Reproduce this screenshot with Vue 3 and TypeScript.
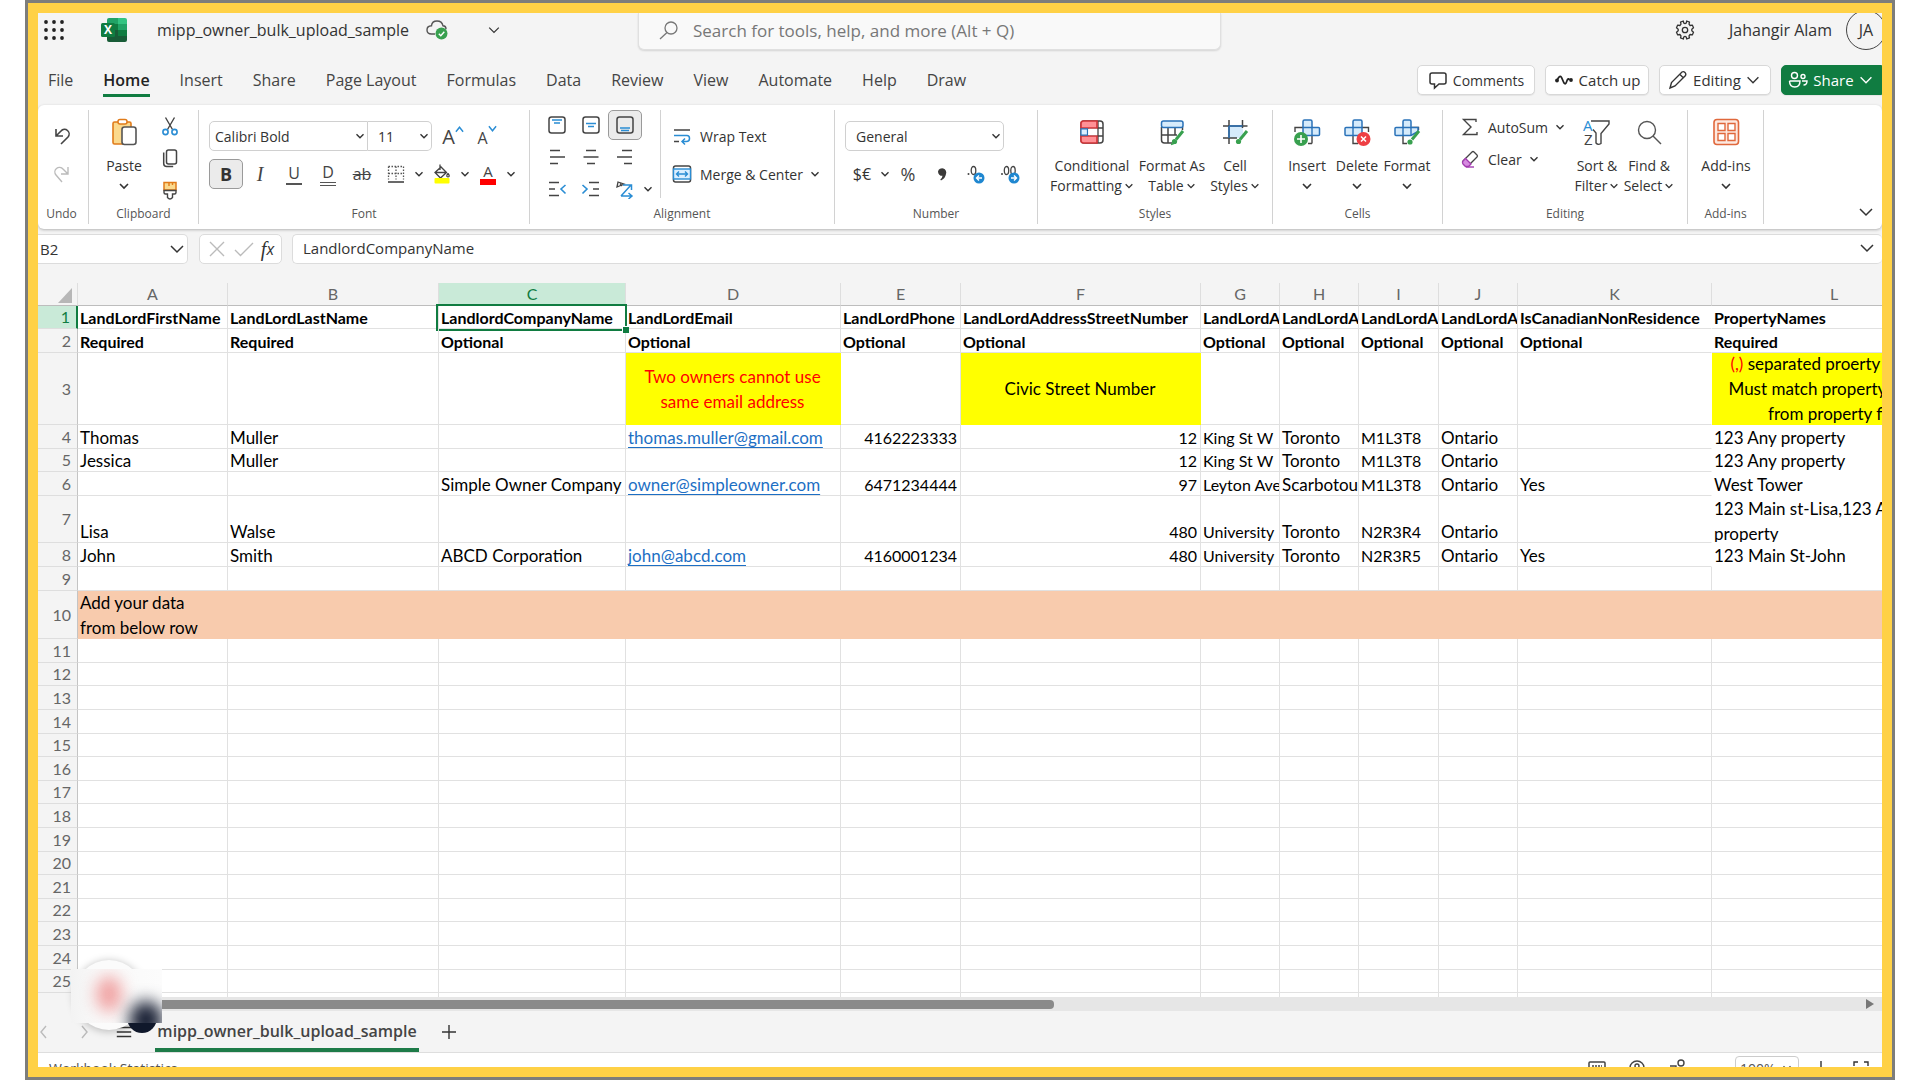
<script setup lang="ts">
import { computed, ref } from 'vue'

interface Column { key: string; cls: string }
interface Row { n: number; size: string; cells: Record<string, string> }

const icons: Record<string, string> = {
  chevron: '<path d="M4 6l4 4 4-4" fill="none" stroke="currentColor" stroke-width="1.6"/>',
  wide: '<path d="M4 7l6 6 6-6" fill="none" stroke="currentColor" stroke-width="1.5"/>',
  undo: '<path d="M4 3v7h7M4 10l5-5a4.600 4.600 0 0 1 7 6l-7 7" fill="none" stroke="#444" stroke-width="1.6"/>',
  redo: '<path d="M16 3v7H9M16 10l-5-5a4.600 4.600 0 0 0-7 6l6 7" fill="none" stroke="#bbb" stroke-width="1.4"/>',
  paste: '<rect x="3" y="4" width="18" height="22" rx="1.500" fill="#fbd98d" stroke="#e07b1a" stroke-width="1.6"/><rect x="8" y="1.500" width="9" height="4.500" rx="2" fill="#fff" stroke="#e07b1a" stroke-width="1.500"/><rect x="12" y="9" width="14" height="17.500" rx="2.500" fill="#fff" stroke="#555" stroke-width="1.6"/>',
  cut: '<path d="M5.500 1.500l7 12M14.500 1.500l-7 12" stroke="#444" stroke-width="1.400" fill="none"/><circle cx="5.500" cy="16" r="2.600" fill="none" stroke="#2a8dd4" stroke-width="1.600"/><circle cx="14.500" cy="16" r="2.600" fill="none" stroke="#2a8dd4" stroke-width="1.600"/>',
  copy: '<rect x="6.500" y="2" width="10" height="14" rx="2" fill="#fff" stroke="#444" stroke-width="1.500"/><path d="M3.700 4.500v11q0 3 3 3h6.500" fill="none" stroke="#444" stroke-width="1.500"/>',
  painter: '<path d="M4 10V2.500h12V10z" fill="#fbd98d" stroke="#e07b1a" stroke-width="1.500"/><path d="M9 2v4M12.500 2v3" stroke="#e07b1a" stroke-width="1.400"/><path d="M4 10.500h12v2q0 1.500-1.500 1.500h-2v3.500q-2.500 3-5 0V14h-2Q4 14 4 12.500z" fill="#fff" stroke="#444" stroke-width="1.400"/>',
  borders: '<path d="M2.500 2.500h15M2.500 9.500h15M2.500 2.500v13M10 2.500v13M17.500 2.500v13" stroke="#555" stroke-width="1.300" stroke-dasharray="1.500 1.500" fill="none"/><path d="M2 18h16" stroke="#444" stroke-width="1.600"/>',
  fill: '<path d="M3 8.500l6-5.500 5.500 5.500-6 5.500zM3.500 8.500h10.500M8 6V0.500" fill="none" stroke="#444" stroke-width="1.300"/><path d="M16 9.500q2.500 3 0 3.500-2.500-.5 0-3.500" fill="none" stroke="#444" stroke-width="1.200"/><rect x="2.500" y="14" width="15" height="5.500" rx="1" fill="#ff0"/>',
  top: '<rect x="2" y="2" width="16" height="16" rx="2.500" fill="#fff" stroke="#444" stroke-width="1.500"/><path d="M5 5h10M7 8h6" stroke="#2a8dd4" stroke-width="1.500"/>',
  middle: '<rect x="2" y="2" width="16" height="16" rx="2.500" fill="#fff" stroke="#444" stroke-width="1.500"/><path d="M5 8.500h10M7 11.500h6" stroke="#2a8dd4" stroke-width="1.500"/>',
  bottom: '<rect x="2" y="2" width="16" height="16" rx="2.500" fill="none" stroke="#444" stroke-width="1.500"/><path d="M5 13h10M6 15.500h8" stroke="#2a8dd4" stroke-width="1.500"/>',
  left: '<path d="M3 3.500h10M3 10h15M3 16.500h8" stroke="#444" stroke-width="1.400"/>',
  center: '<path d="M5 3.500h10M2.500 10h15M6 16.500h8" stroke="#444" stroke-width="1.400"/>',
  right: '<path d="M7 3.500h10M2 10h15M9 16.500h8" stroke="#444" stroke-width="1.400"/>',
  outdent: '<path d="M2 3.500h10M2 10h6M2 16.500h10" stroke="#444" stroke-width="1.400"/><path d="M18.500 6L14 10l4.500 4.500" fill="none" stroke="#2a8dd4" stroke-width="1.600"/>',
  indent: '<path d="M8 3.500h10M12 10h6M8 16.500h10" stroke="#444" stroke-width="1.400"/><path d="M1.500 6L6 10l-4.500 4.500" fill="none" stroke="#2a8dd4" stroke-width="1.600"/>',
  orient: '<path d="M2 8L3 3l6 2zM5 4.500l2 2.500" fill="none" stroke="#444" stroke-width="1.300"/><path d="M6 17L16 6M8 6h8.500v5M6 17h10.500M13.500 14l3.500 3-3.500 3" fill="none" stroke="#2a8dd4" stroke-width="1.500"/>',
  wrap: '<path d="M2 4h16M2 15.500h5" stroke="#444" stroke-width="1.500"/><path d="M2 9.500h13q2.500 0 2.500 3t-3 3H10M13 12.500l-3 3 3 3" fill="none" stroke="#2a8dd4" stroke-width="1.500"/>',
  merge: '<rect x="1.500" y="2" width="17" height="16" rx="2" fill="#fff" stroke="#444" stroke-width="1.500"/><rect x="1.500" y="5" width="17" height="10" fill="#dcefff" stroke="#2a8dd4" stroke-width="1.400"/><path d="M4.500 10h11M7 7.500L4.500 10 7 12.500M13 7.500l2.500 2.500-2.500 2.500" fill="none" stroke="#2a8dd4" stroke-width="1.400"/>',
  comma: '<path d="M6 7.500a4.200 4.200 0 1 1 8 2.500q-.8 4.500-5 6.500l-.7-1q2-1.500 2.200-3.700A4.200 4.200 0 0 1 6 7.500" fill="#3b3a39"/>',
  decLeft: '<circle cx="2.500" cy="10" r="1" fill="#444"/><ellipse cx="7.500" cy="6.500" rx="2.300" ry="4" fill="none" stroke="#444" stroke-width="1.300"/><circle cx="13" cy="14" r="5.500" fill="#1f87d0"/><path d="M16 14h-5.500M13 11.500L10.500 14l2.500 2.500" fill="none" stroke="#fff" stroke-width="1.400"/>',
  decRight: '<circle cx="2" cy="10" r="1" fill="#444"/><ellipse cx="6.500" cy="6.500" rx="2.200" ry="4" fill="none" stroke="#444" stroke-width="1.300"/><ellipse cx="13" cy="6.500" rx="2.200" ry="4" fill="none" stroke="#444" stroke-width="1.300"/><circle cx="14" cy="14" r="5.500" fill="#1f87d0"/><path d="M11 14h5.500M14 11.500l2.500 2.500-2.500 2.500" fill="none" stroke="#fff" stroke-width="1.400"/>',
  conditional: '<rect x="3" y="3" width="22" height="22" rx="3" fill="#fff" stroke="#444" stroke-width="1.500"/><path d="M20 3v22M3 10h22M3 18h22" stroke="#444" stroke-width="1.300"/><path d="M5.500 3H19v7H3V5.500Q3 3 5.500 3M3 18h16v7H5.500Q3 25 3 22.500z" fill="#ff9196" stroke="#d13438" stroke-width="1.600"/><path d="M3 10.800h6.500v6.400H3z" fill="#dcefff" stroke="#2a72b8" stroke-width="1.200"/><path d="M10.500 10.800H19v6.400h-8.500z" fill="#fff"/>',
  table: '<path d="M3.500 9v13q0 3 3 3H14M3.500 17H19M10 9v16M17 9v8M24.500 9v3" fill="none" stroke="#444" stroke-width="1.500"/><rect x="3.500" y="3" width="21.500" height="6.500" rx="2" fill="#d6ebfb" stroke="#2a72b8" stroke-width="1.500"/><path d="M25 13l-7 8.500" stroke="#38a04f" stroke-width="3"/><circle cx="16.500" cy="23.500" r="2.600" fill="#38a04f"/><path d="M13 26.500l4-1.500" stroke="#38a04f" stroke-width="1.500"/>',
  cellstyle: '<rect x="8" y="8" width="14" height="12" fill="#d6ebfb"/><path d="M2 8h24.500M2 20h14M8 2v24M21.500 2v8" stroke="#444" stroke-width="1.500"/><path d="M8 8h13.500M8 8v12" stroke="#2a72b8" stroke-width="1.500"/><path d="M26 13l-7 8.500" stroke="#38a04f" stroke-width="3"/><circle cx="17.500" cy="23.500" r="2.600" fill="#38a04f"/>',
  insert: '<path d="M2 14V9.500h8M19 25.500h-4M19 25.500V18" fill="none" stroke="#444" stroke-width="1.400"/><path d="M10 3.500q0-1.500 1.500-1.500h6q1.500 0 1.500 1.500V9.500h6.500q1 0 1 1v6q0 1-1 1H10z" fill="#d6ebfb" stroke="#2a72b8" stroke-width="1.500"/><path d="M10 9.500h9v8" fill="none" stroke="#2a72b8" stroke-width="1.400"/><circle cx="8" cy="21" r="7" fill="#38a04f"/><path d="M8 17v8M4 21h8" stroke="#fff" stroke-width="1.600"/>',
  remove: '<path d="M10 18v7.500h5M19 9.500h6.500V14" fill="none" stroke="#444" stroke-width="1.400"/><path d="M10 9.500V3.500Q10 2 11.500 2h6Q19 2 19 3.500v14H3q-1 0-1-1v-6q0-1 1-1z" fill="#d6ebfb" stroke="#2a72b8" stroke-width="1.500"/><path d="M10 9.500h9M10 9.500v8" stroke="#2a72b8" stroke-width="1.400"/><circle cx="20.500" cy="21" r="7" fill="#ee3f44"/><path d="M18 18.500l5 5M23 18.500l-5 5" stroke="#fff" stroke-width="1.500"/>',
  format: '<path d="M10 18v7.500h4M19 9.500h6.500V12" fill="none" stroke="#444" stroke-width="1.400"/><path d="M10 9.500V3.500Q10 2 11.500 2h5Q18 2 18 3.500v6h7v4L18 17.500H3q-1 0-1-1v-6q0-1 1-1z" fill="#d6ebfb" stroke="#2a72b8" stroke-width="1.500"/><path d="M10 9.500h8v8M10 9.500v8" fill="none" stroke="#2a72b8" stroke-width="1.400"/><path d="M26 13l-7 8.500" stroke="#38a04f" stroke-width="3"/><circle cx="17" cy="24" r="2.600" fill="#38a04f"/>',
  sum: '<path d="M16 5V2.500H3.500L11 10l-7.500 7.500H17V15" fill="none" stroke="#444" stroke-width="1.400"/>',
  eraser: '<path d="M3 12l9-9q1-1 2 0l3 3q1 1 0 2l-9 9H6l-3-3q-1-1 0-2" fill="#fff" stroke="#444" stroke-width="1.300"/><path d="M3 12l2.500-2.500L11 15l-2.500 2.500h-3L3 15q-1-1.500 0-3" fill="#d68be0" stroke="#a33bb0" stroke-width="1.300"/><path d="M6 18h8" stroke="#a33bb0" stroke-width="1.400"/>',
  sort: '<text x="0" y="13" font-size="15" font-family="Open Sans, sans-serif" fill="#2a8dd4">A</text><text x="1" y="27" font-size="15" font-family="Open Sans, sans-serif" fill="#444">Z</text><path d="M8 3h18v3l-8 9.500v10q-3 2-5-.500V15l-3-3.500" fill="none" stroke="#444" stroke-width="1.400"/>',
  find: '<circle cx="12" cy="12" r="8.500" fill="none" stroke="#555" stroke-width="1.400"/><path d="M18 18l8 8" stroke="#555" stroke-width="1.400"/>',
  addins: '<rect x="2" y="1.500" width="24.500" height="25" rx="3" fill="#fde9e0" stroke="#e0683c" stroke-width="1.600"/><path d="M6 5.500h7v7H6zM16 5.500h7v7h-7zM6 15.500h7v7H6zM16 15.500h7v7h-7z" fill="#fff" stroke="#e0683c" stroke-width="1.400"/>',
  comment: '<path d="M4 3h12q2 0 2 2v7q0 2-2 2h-5l-4.500 4v-4H4q-2 0-2-2V5q0-2 2-2z" fill="none" stroke="#333" stroke-width="1.500"/>',
  catchup: '<path d="M3 10.500q2.500-6 4.500-3l2.500 5.500q1.500 2 2.500-1l1-2.500q1-1.500 2 .5" fill="none" stroke="#222" stroke-width="1.700"/><circle cx="3" cy="10.500" r="1.900" fill="#222"/><circle cx="17" cy="10" r="1.900" fill="#222"/>',
  pencil: '<path d="M2 18l1.500-5.500L14 2q1.500-1 3 .5t.5 3L7 16zM12 4.500L15.500 8" fill="none" stroke="#333" stroke-width="1.400"/>',
  people: '<circle cx="6.500" cy="5.500" r="3" fill="none" stroke="#fff" stroke-width="1.400"/><circle cx="15" cy="6.500" r="2" fill="none" stroke="#fff" stroke-width="1.400"/><path d="M1.500 11h10.500q0 6-5.200 6T1.500 11M14 11h5q0 4-3.500 4" fill="none" stroke="#fff" stroke-width="1.400"/>',
  search: '<circle cx="12" cy="8" r="6" fill="none" stroke="#777" stroke-width="1.300"/><path d="M8 12.500L1 19" stroke="#777" stroke-width="1.300"/>',
  gear: '<path d="M8.300 1l.4 2L10 3.600 11.300 3l.4-2 2.800 1.200-.5 2 1.100 1.300 2.200-.4 1.200 2.700-1.700 1.400v1.600l1.700 1.400-1.200 2.700-2.200-.4-1.100 1.300.5 2L11.700 19l-.4-2-1.300-.600-1.300.6-.4 2-2.800-1.200.5-2-1.100-1.300-2.200.4-1.200-2.700 1.700-1.400V9.200L1.500 7.800l1.200-2.700 2.200.4L6 4.200l-.5-2z" fill="none" stroke="#333" stroke-width="1.300" stroke-linejoin="round"/><circle cx="10" cy="10" r="2.700" fill="none" stroke="#333" stroke-width="1.300"/>',
  cross: '<path d="M3 3l14 14M17 3L3 17" stroke="#bbb" stroke-width="1.400"/>',
  check: '<path d="M1 11l5.500 5.500L19 4" fill="none" stroke="#bbb" stroke-width="1.400"/>',
  prev: '<path d="M12 4l-5 6 5 6" fill="none" stroke="#bbb" stroke-width="1.400"/>',
  next: '<path d="M8 4l5 6-5 6" fill="none" stroke="#bbb" stroke-width="1.400"/>',
  menu: '<path d="M2 5h16M2 10h16M2 15h16" stroke="#333" stroke-width="1.400"/>',
  plus: '<path d="M3 10h14M10 3v14" stroke="#333" stroke-width="1.400"/>',
  minus: '<path d="M3 10h14" stroke="#333" stroke-width="1.400"/>',
  keyboard: '<rect x="2" y="4" width="16" height="12" rx="1" fill="none" stroke="#444" stroke-width="1.500"/><path d="M5 8h10" stroke="#444" stroke-width="1.400" stroke-dasharray="2 1"/>',
  help: '<circle cx="10" cy="10" r="7" fill="none" stroke="#444" stroke-width="1.400"/><circle cx="10" cy="8" r="2" fill="none" stroke="#444" stroke-width="1.400"/>',
  share: '<circle cx="14" cy="5" r="3" fill="none" stroke="#444" stroke-width="1.400"/><path d="M3 8h6v8H3M12 12h6" fill="none" stroke="#444" stroke-width="1.400"/>',
  full: '<path d="M3 8V4h4M13 4h4v4M3 12v4h4M17 12v4h-4" fill="none" stroke="#333" stroke-width="1.400"/>',
}

const tabs = ['File', 'Home', 'Insert', 'Share', 'Page Layout', 'Formulas', 'Data', 'Review', 'View', 'Automate', 'Help', 'Draw']
const activeTab = ref('Home')

const alignButtons = [
  ['top', 'Top align'], ['middle', 'Middle align'], ['bottom', 'Bottom align'], ['', ''],
  ['left', 'Align left'], ['center', 'Center'], ['right', 'Align right'], ['', ''],
  ['outdent', 'Decrease indent'], ['indent', 'Increase indent'], ['orient', 'Orientation'], ['chevron', 'More orientations'],
]

const columns: Column[] = 'ABCDEFGHIJKL'.split('').map((key) => ({ key, cls: 'col-' + key.toLowerCase() }))

const names = ['LandLordFirstName', 'LandLordLastName', 'LandlordCompanyName', 'LandLordEmail', 'LandLordPhone', 'LandLordAddressStreetNumber', 'LandLordAddress', 'LandLordAddress', 'LandLordAddress', 'LandLordAddress', 'IsCanadianNonResidence', 'PropertyNames']
const toCells = (values: string[]): Record<string, string> =>
  Object.fromEntries(values.map((value, i) => [columns[i].key, value]))

const rows = computed<Row[]>(() => {
  const filled: Row[] = [
    { n: 1, size: 'h23', cells: toCells(names) },
    { n: 2, size: 'h24', cells: toCells(names.map((_, i) => (i < 2 || i === 11 ? 'Required' : 'Optional'))) },
    { n: 3, size: 'h72', cells: { D: 'Two owners cannot use\nsame email address', F: 'Civic Street Number', L: ' separated proerty names.\nMust match property names\nfrom property file' } },
    { n: 4, size: 'h24', cells: toCells(['Thomas', 'Muller', '', 'thomas.muller@gmail.com', '4162223333', '12', 'King St W', 'Toronto', 'M1L3T8', 'Ontario', '', '123 Any property']) },
    { n: 5, size: 'h23', cells: toCells(['Jessica', 'Muller', '', '', '', '12', 'King St W', 'Toronto', 'M1L3T8', 'Ontario', '', '123 Any property']) },
    { n: 6, size: 'h24', cells: toCells(['', '', 'Simple Owner Company', 'owner@simpleowner.com', '6471234444', '97', 'Leyton Ave', 'Scarbotough', 'M1L3T8', 'Ontario', 'Yes', 'West Tower']) },
    { n: 7, size: 'h47', cells: toCells(['Lisa', 'Walse', '', '', '', '480', 'University', 'Toronto', 'N2R3R4', 'Ontario', '', '123 Main st-Lisa,123 Any\nproperty']) },
    { n: 8, size: 'h24', cells: toCells(['John', 'Smith', 'ABCD Corporation', 'john@abcd.com', '4160001234', '480', 'University', 'Toronto', 'N2R3R5', 'Ontario', 'Yes', '123 Main St-John']) },
    { n: 9, size: 'h24', cells: {} },
    { n: 10, size: 'h48', cells: { A: 'Add your data\nfrom below row' } },
  ]
  for (let n = 11; n <= 26; n++) {
    filled.push({ n, size: n % 5 === 2 || n % 5 === 0 ? 'h23' : 'h24', cells: {} })
  }
  return filled
})

const cellClass = (row: Row, key: string) => ({
  bold: row.n <= 2,
  num: row.n > 3 && (key === 'E' || key === 'F'),
  dense: row.n <= 2 || 'EFGI'.includes(key) && row.n > 3,
  note: row.n === 3 && 'DFL'.includes(key),
  warn: row.n === 3 && key === 'D',
  wrap: (row.cells[key] || '').includes('\n'),
  band: row.n === 10,
  bare: key === 'L' && row.n > 3 && row.n < 9,
  open: key === 'K' && row.n < 9,
  picked: key === 'C' && row.n === 1,
})
</script>

<template>
  <div class="frame">
    <div class="app">
      <header class="topbar">
        <div class="doc">
          <button class="plain" aria-label="App launcher">
            <svg class="i20" viewBox="0 0 20 20"><g fill="#222"><template v-for="y in 3" :key="y"><circle v-for="x in 3" :key="x" :cx="x * 8 - 6" :cy="y * 8 - 6" r="1.9" /></template></g></svg>
          </button>
          <svg class="excel" viewBox="0 0 26 24">
            <path d="M8 0h9v6H6V2q0-2 2-2z" fill="#21a366" /><path d="M17 0h7q2 0 2 2v4h-9z" fill="#33c481" />
            <path d="M6 6h11v6H6z" fill="#107c41" /><path d="M17 6h9v6h-9z" fill="#21a366" />
            <path d="M6 12h20v10q0 2-2 2H8q-2 0-2-2z" fill="#185c37" /><path d="M17 12h9v6h-9z" fill="#107c41" />
            <rect y="5" width="14" height="14" rx="1.500" fill="#107c41" />
            <text x="7" y="16" text-anchor="middle" font-family="Open Sans, sans-serif" font-size="12" font-weight="700" fill="#fff">X</text>
          </svg>
          <span class="filename">mipp_owner_bulk_upload_sample</span>
          <svg class="cloud" viewBox="0 0 22 20">
            <path d="M9 14H5.500Q1 14 1 10t4.500-4.200Q6 1 11 1t6 4.800Q20 6 20 9" fill="none" stroke="#555" stroke-width="1.400" />
            <circle cx="15.500" cy="13.500" r="6" fill="#38a04f" /><path d="M12.800 13.800l2 2 3.500-4" fill="none" stroke="#fff" stroke-width="1.400" />
          </svg>
          <button class="plain title-more" aria-label="File options"><svg class="i16" viewBox="0 0 20 20" v-html="icons.wide" /></button>
        </div>
        <label class="search">
          <svg class="i20" viewBox="0 0 20 20" v-html="icons.search" />
          <input type="search" aria-label="Search" placeholder="Search for tools, help, and more (Alt + Q)" />
        </label>
        <div class="account">
          <button class="plain" aria-label="Settings"><svg class="i20" viewBox="0 0 20 20" v-html="icons.gear" /></button>
          <span class="user">Jahangir Alam</span>
          <button class="avatar">JA</button>
        </div>
      </header>

      <div class="tabrow">
        <nav class="tabs">
          <button v-for="tab in tabs" :key="tab" class="tab" :class="{ active: tab === activeTab }" @click="activeTab = tab">{{ tab }}</button>
        </nav>
        <div class="actions">
          <button class="action comments"><svg class="i20" viewBox="0 0 20 20" v-html="icons.comment" />Comments</button>
          <button class="action catchup"><svg class="i20" viewBox="0 0 20 20" v-html="icons.catchup" />Catch up</button>
          <button class="action editing"><svg class="i20" viewBox="0 0 20 20" v-html="icons.pencil" />Editing<svg class="i18" viewBox="0 0 20 20" v-html="icons.wide" /></button>
          <button class="action share"><svg class="i20" viewBox="0 0 20 20" v-html="icons.people" />Share<svg class="i18" viewBox="0 0 20 20" v-html="icons.wide" /></button>
        </div>
      </div>

      <section class="ribbon">
        <div class="group g-undo">
          <div class="body column two">
            <button class="tool" aria-label="Undo"><svg class="i20" viewBox="0 0 20 20" v-html="icons.undo" /></button>
            <button class="tool" aria-label="Redo"><svg class="i20" viewBox="0 0 20 20" v-html="icons.redo" /></button>
          </div>
          <div class="caption">Undo</div>
        </div>

        <div class="group g-clip">
          <div class="body">
            <button class="big w50"><svg class="i28" viewBox="0 0 28 28" v-html="icons.paste" /><span>Paste</span><svg class="i16" viewBox="0 0 16 16" v-html="icons.chevron" /></button>
            <div class="column three">
              <button class="tool" aria-label="Cut"><svg class="i20" viewBox="0 0 20 20" v-html="icons.cut" /></button>
              <button class="tool" aria-label="Copy"><svg class="i20" viewBox="0 0 20 20" v-html="icons.copy" /></button>
              <button class="tool" aria-label="Format painter"><svg class="i20" viewBox="0 0 20 20" v-html="icons.painter" /></button>
            </div>
          </div>
          <div class="caption">Clipboard</div>
        </div>

        <div class="group g-font">
          <div class="body column two">
            <div class="line">
              <span class="pick family"><select aria-label="Font"><option>Calibri Bold</option></select><svg class="i16" viewBox="0 0 16 16" v-html="icons.chevron" /></span>
              <span class="pick size"><select aria-label="Font size"><option>11</option></select><svg class="i16" viewBox="0 0 16 16" v-html="icons.chevron" /></span>
              <button class="tool grow" aria-label="Grow font"><span class="letter big-a">A</span><svg class="caret" viewBox="0 0 10 8"><path d="M1 7l4-5 4 5" fill="none" stroke="#2a8dd4" stroke-width="1.600" /></svg></button>
              <button class="tool" aria-label="Shrink font"><span class="letter small-a">A</span><svg class="caret" viewBox="0 0 10 8"><path d="M1 1l4 5 4-5" fill="none" stroke="#2a8dd4" stroke-width="1.600" /></svg></button>
            </div>
            <div class="line">
              <button class="tool pressed letter"><b>B</b></button>
              <button class="tool letter"><i>I</i></button>
              <button class="tool letter"><span class="under">U</span></button>
              <button class="tool letter"><span class="double">D</span></button>
              <button class="tool letter"><s>ab</s></button>
              <button class="tool" aria-label="Borders"><svg class="i20" viewBox="0 0 20 20" v-html="icons.borders" /></button>
              <button class="drop" aria-label="More borders"><svg class="i16" viewBox="0 0 16 16" v-html="icons.chevron" /></button>
              <button class="tool" aria-label="Fill color"><svg class="i20" viewBox="0 0 20 20" v-html="icons.fill" /></button>
              <button class="drop" aria-label="More fill colors"><svg class="i16" viewBox="0 0 16 16" v-html="icons.chevron" /></button>
              <button class="tool letter"><span class="ink">A</span></button>
              <button class="drop" aria-label="More font colors"><svg class="i16" viewBox="0 0 16 16" v-html="icons.chevron" /></button>
            </div>
          </div>
          <div class="caption">Font</div>
        </div>

        <div class="group g-align">
          <div class="body">
            <div class="aligns">
              <template v-for="(item, i) in alignButtons" :key="i">
                <button v-if="item[0]" class="tool" :class="{ pressed: item[0] === 'bottom', drop: item[0] === 'chevron' }" :aria-label="item[1]">
                  <svg v-if="item[0] === 'chevron'" class="i16" viewBox="0 0 16 16" v-html="icons.chevron" />
                  <svg v-else class="i20" viewBox="0 0 20 20" v-html="icons[item[0]]" />
                </button>
                <span v-else></span>
              </template>
            </div>
            <div class="column two ruled">
              <button class="text"><svg class="i20" viewBox="0 0 20 20" v-html="icons.wrap" />Wrap Text</button>
              <button class="text"><svg class="i20" viewBox="0 0 20 20" v-html="icons.merge" />Merge &amp; Center<svg class="i16" viewBox="0 0 16 16" v-html="icons.chevron" /></button>
            </div>
          </div>
          <div class="caption">Alignment</div>
        </div>

        <div class="group g-number">
          <div class="body column two">
            <div class="line">
              <span class="pick format"><select aria-label="Number format"><option>General</option></select><svg class="i16" viewBox="0 0 16 16" v-html="icons.chevron" /></span>
            </div>
            <div class="line">
              <button class="tool money">$€</button>
              <button class="drop" aria-label="More currencies"><svg class="i16" viewBox="0 0 16 16" v-html="icons.chevron" /></button>
              <button class="tool letter">%</button>
              <button class="tool" aria-label="Comma style"><svg class="i20" viewBox="0 0 20 20" v-html="icons.comma" /></button>
              <button class="tool" aria-label="Increase decimal"><svg class="i20" viewBox="0 0 20 20" v-html="icons.decLeft" /></button>
              <button class="tool" aria-label="Decrease decimal"><svg class="i20" viewBox="0 0 20 20" v-html="icons.decRight" /></button>
            </div>
          </div>
          <div class="caption">Number</div>
        </div>

        <div class="group g-styles">
          <div class="body">
            <button class="big w84"><svg class="i28" viewBox="0 0 28 28" v-html="icons.conditional" /><span>Conditional</span><span>Formatting<svg class="tiny" viewBox="2 2 12 12" v-html="icons.chevron" /></span></button>
            <button class="big w76"><svg class="i28" viewBox="0 0 28 28" v-html="icons.table" /><span>Format As</span><span>Table<svg class="tiny" viewBox="2 2 12 12" v-html="icons.chevron" /></span></button>
            <button class="big w50"><svg class="i28" viewBox="0 0 28 28" v-html="icons.cellstyle" /><span>Cell</span><span>Styles<svg class="tiny" viewBox="2 2 12 12" v-html="icons.chevron" /></span></button>
          </div>
          <div class="caption">Styles</div>
        </div>

        <div class="group g-cells">
          <div class="body">
            <button class="big w50"><svg class="i28" viewBox="0 0 28 28" v-html="icons.insert" /><span>Insert</span><svg class="i16" viewBox="0 0 16 16" v-html="icons.chevron" /></button>
            <button class="big w50"><svg class="i28" viewBox="0 0 28 28" v-html="icons.remove" /><span>Delete</span><svg class="i16" viewBox="0 0 16 16" v-html="icons.chevron" /></button>
            <button class="big w50"><svg class="i28" viewBox="0 0 28 28" v-html="icons.format" /><span>Format</span><svg class="i16" viewBox="0 0 16 16" v-html="icons.chevron" /></button>
          </div>
          <div class="caption">Cells</div>
        </div>

        <div class="group g-edit">
          <div class="body">
            <div class="column sums">
              <button class="text"><svg class="i20" viewBox="0 0 20 20" v-html="icons.sum" />AutoSum<svg class="i16" viewBox="0 0 16 16" v-html="icons.chevron" /></button>
              <button class="text"><svg class="i20" viewBox="0 0 20 20" v-html="icons.eraser" />Clear<svg class="i16" viewBox="0 0 16 16" v-html="icons.chevron" /></button>
            </div>
            <button class="big w52"><svg class="i28" viewBox="0 0 28 28" v-html="icons.sort" /><span>Sort &amp;</span><span>Filter<svg class="tiny" viewBox="2 2 12 12" v-html="icons.chevron" /></span></button>
            <button class="big w52"><svg class="i28" viewBox="0 0 28 28" v-html="icons.find" /><span>Find &amp;</span><span>Select<svg class="tiny" viewBox="2 2 12 12" v-html="icons.chevron" /></span></button>
          </div>
          <div class="caption">Editing</div>
        </div>

        <div class="group g-addins">
          <div class="body">
            <button class="big w76"><svg class="i28" viewBox="0 0 28 28" v-html="icons.addins" /><span>Add-ins</span><svg class="i16" viewBox="0 0 16 16" v-html="icons.chevron" /></button>
          </div>
          <div class="caption">Add-ins</div>
        </div>
        <button class="plain collapse" aria-label="Ribbon options"><svg class="i20" viewBox="0 0 20 20" v-html="icons.wide" /></button>
      </section>

      <section class="formula">
        <label class="namebox"><input aria-label="Name box" value="B2" /><svg class="i20" viewBox="0 0 20 20" v-html="icons.wide" /></label>
        <div class="fx">
          <button class="plain" aria-label="Cancel"><svg class="i20" viewBox="0 0 20 20" v-html="icons.cross" /></button>
          <button class="plain" aria-label="Enter"><svg class="i20" viewBox="0 0 20 20" v-html="icons.check" /></button>
          <button class="plain fn"><i>f</i><sub>x</sub></button>
        </div>
        <label class="entry"><input aria-label="Formula" value="LandlordCompanyName" /><svg class="i20" viewBox="0 0 20 20" v-html="icons.wide" /></label>
      </section>

      <main class="sheet">
        <table>
          <colgroup><col class="col-head" /><col v-for="c in columns" :key="c.key" :class="c.cls" /></colgroup>
          <thead>
            <tr>
              <th class="corner"><svg viewBox="0 0 14 15"><path d="M14 0v15H0z" fill="#b7b7b7" /></svg></th>
              <th v-for="c in columns" :key="c.key" :class="{ on: c.key === 'C' }">{{ c.key }}</th>
            </tr>
          </thead>
          <tbody>
            <tr v-for="row in rows" :key="row.n">
              <th :class="{ on: row.n === 1 }"><div class="cell" :class="row.size">{{ row.n }}</div></th>
              <td v-for="c in columns" :key="c.key" :class="cellClass(row, c.key)">
                <div class="cell" :class="row.size">
                  <a v-if="(row.cells[c.key] || '').includes('@')" :href="'mailto:' + row.cells[c.key]">{{ row.cells[c.key] }}</a>
                  <span v-else-if="row.cells[c.key]"><em v-if="row.n === 3 && c.key === 'L'">(,)</em>{{ row.cells[c.key] }}</span>
                </div>
              </td>
            </tr>
          </tbody>
        </table>
      </main>

      <div class="scroll"><div class="track"><div class="thumb"></div><svg viewBox="0 0 8 10"><path d="M0 0l8 5-8 5z" fill="#777" /></svg></div></div>

      <footer class="sheets">
        <button class="plain prevsheet" aria-label="Previous sheet"><svg class="i20" viewBox="0 0 20 20" v-html="icons.prev" /></button>
        <button class="plain nextsheet" aria-label="Next sheet"><svg class="i20" viewBox="0 0 20 20" v-html="icons.next" /></button>
        <button class="plain all" aria-label="All sheets"><svg class="i18" viewBox="0 0 20 20" v-html="icons.menu" /></button>
        <button class="sheettab">mipp_owner_bulk_upload_sample</button>
        <button class="plain" aria-label="New sheet"><svg class="i20" viewBox="0 0 20 20" v-html="icons.plus" /></button>
      </footer>

      <div class="status">
        <div class="statusline">
          <span>Workbook Statistics</span>
          <div class="zoom">
            <svg class="i16" viewBox="0 0 20 20" v-html="icons.minus" />
            <svg class="i20" viewBox="0 0 20 20" v-html="icons.keyboard" />
            <svg class="i20" viewBox="0 0 20 20" v-html="icons.help" />
            <svg class="i20" viewBox="0 0 20 20" v-html="icons.share" />
            <svg class="i20" viewBox="0 0 20 20" v-html="icons.minus" />
            <span class="percent">100%<svg class="i16" viewBox="0 0 16 16" v-html="icons.chevron" /></span>
            <svg class="i20" viewBox="0 0 20 20" v-html="icons.plus" />
            <svg class="i20" viewBox="0 0 20 20" v-html="icons.full" />
          </div>
        </div>
      </div>

      <div class="bubble" aria-hidden="true">
        <div class="disc"></div>
        <div class="dark"></div>
        <div class="smudge"><div class="pink"></div><div class="navy"></div></div>
      </div>
    </div>
  </div>
</template>

<style>
body { margin: 0; background: #fff; }
</style>

<style scoped>
* { box-sizing: border-box; }
.frame { height: 100vh; margin: 0 25px; padding: 10px; border: 3px solid #7d7d7b; background: #ffd146; font-family: "Open Sans", "Noto Sans", sans-serif; color: #333; }
.app { position: relative; display: flex; flex-direction: column; height: 100%; overflow: hidden; background: #f4f4f4; }
button, input, select { font: inherit; color: inherit; border: 0; background: none; padding: 0; margin: 0; outline: 0; }
button { display: flex; align-items: center; justify-content: center; white-space: nowrap; flex: none; }
svg { display: block; flex: none; }
.i16 { width: 16px; height: 16px; }
.i18 { width: 18px; height: 18px; }
.i20 { width: 20px; height: 20px; }
.i28 { width: 28px; height: 28px; }

.topbar { display: flex; align-items: center; height: 35px; padding-bottom: 2px; flex: none; font-size: 16px; }
.doc { display: flex; align-items: center; width: 600px; padding-left: 6px; flex: none; }
.excel { width: 26px; height: 24px; margin-left: 37px; }
.filename { margin-left: 30px; width: 257px; white-space: nowrap; }
.cloud { width: 22px; height: 20px; margin-left: 12px; }
.title-more { margin-left: 38px; }
.search { display: flex; align-items: center; gap: 14px; flex: 0 1 583px; height: 37px; padding: 0 20px 2px; align-self: flex-start; background: #f9f9f9; border: 1px solid #e0e0e0; border-top: 0; border-radius: 0 0 6px 6px; box-shadow: 0 1px 2px #0002; font-size: 17px; }
.search input { flex: 1; min-width: 0; }
.search input::placeholder { color: #777; opacity: 1; }
.account { display: flex; align-items: center; margin: 0 -4px 0 auto; }
.user { margin: 0 14px 0 34px; white-space: nowrap; }
.avatar { width: 40px; height: 40px; border: 1px solid #444; border-radius: 50%; }

.tabrow { display: flex; align-items: center; height: 57px; padding: 7px 0 0 10px; flex: none; }
.tabs { display: flex; gap: 30px; font-size: 16px; color: #444; }
.tab { height: 34px; border-bottom: 3px solid transparent; padding-top: 2px; }
.tab.active { font-weight: 600; color: #222; border-color: #107c41; }
.actions { display: flex; gap: 10px; margin-left: auto; font-size: 15px; }
.action { height: 30px; gap: 5px; background: #fff; border: 1px solid #d8d8d8; border-radius: 5px; box-shadow: 0 1px 1px #0001; }
.comments { width: 118px; font-size: 14px; }
.catchup { width: 104px; }
.editing { width: 112px; }
.share { width: 101px; background: #107c41; border-color: #107c41; color: #fff; border-radius: 5px 0 0 5px; }
.action .i18 { margin-left: -2px; }

.ribbon { display: flex; align-items: center; height: 124px; flex: none; background: #fff; border-radius: 6px; box-shadow: 0 1px 3px #0004; }
.group { display: flex; flex-direction: column; height: 114px; border-right: 1px solid #d2d2d2; flex: none; font-size: 14px; }
.body { display: flex; height: 95px; }
.column { display: flex; flex-direction: column; }
.caption { font-size: 12px; line-height: 18px; text-align: center; color: #555; }
.two { padding-top: 7px; }
.two > * { height: 38px; }
.line { display: flex; align-items: center; }
.tool { width: 34px; height: 30px; }
.two > .tool { height: 38px; align-self: center; }
.three .tool { height: 32px; }
.pressed { background: #ebebeb; border: 1px solid #9a9a9a; border-radius: 5px; }
.drop { width: 12px; height: 30px; }
.drop .i16, .text .i16 { width: 14px; height: 14px; }
.big { flex-direction: column; justify-content: flex-start; padding-top: 8px; line-height: 20px; }
.big .i28 { margin-bottom: 10px; }
.big .i16 { margin-top: 2px; }
.big span { display: flex; align-items: center; }
.tiny { width: 10px; height: 10px; margin-left: 2px; }
.w50 { width: 50px; }
.w52 { width: 52px; }
.w76 { width: 76px; }
.w84 { width: 84px; }
.text { justify-content: flex-start; gap: 8px; }
.text .i16 { margin-left: -3px; }
.letter { font-size: 18px; color: #444; }
.letter b { color: #333; }
.letter i { font-family: "Liberation Serif", serif; font-size: 20px; }
.under, .double { line-height: 20px; border-bottom: 2px solid #555; padding: 0 2px; font-size: 16px; }
.double { border-bottom: 4px double #555; }
.letter s { font-size: 16px; }
.ink { line-height: 15px; border-bottom: 6px solid #f00; padding: 0 3px; font-size: 15px; }
.big-a { font-size: 20px; }
.small-a { font-size: 16px; padding-top: 4px; }
.caret { width: 9px; height: 8px; align-self: flex-start; margin-top: 4px; }
.money { font-size: 16px; }
.grow { margin-left: 4px; }
.pick { position: relative; display: flex; height: 30px; border: 1px solid #d0d0d0; border-radius: 5px; }
.pick select { width: 100%; appearance: none; padding: 0 5px; }
.pick svg { position: absolute; right: 0; top: 6px; width: 14px; height: 16px; pointer-events: none; }
.family { width: 159px; border-radius: 5px 0 0 5px; }
.size { width: 64px; border-left: 0; border-radius: 0 5px 5px 0; }
.size select { padding-left: 10px; }
.format { width: 159px; }
.format select { padding-left: 10px; }
.g-undo { width: 51px; padding-right: 3px; }
.g-clip { width: 110px; }
.g-clip .body { padding-left: 10px; gap: 4px; }
.g-font { width: 331px; }
.g-align { width: 305px; }
.g-number { width: 203px; }
.g-font .body, .g-align .body, .g-number .body { padding-left: 10px; }
.g-styles { width: 235px; }
.g-styles .body { padding-left: 12px; }
.g-cells { width: 170px; }
.g-cells .body { padding-left: 9px; }
.g-edit { width: 245px; }
.g-edit .body { padding-left: 17px; }
.sums { width: 111px; padding-top: 1px; }
.sums .text { height: 32px; }
.g-addins { width: 76px; }
.aligns { display: grid; grid-template-columns: 34px 34px 34px 12px; grid-auto-rows: 32px; height: 96px; }
.ruled { margin-left: 6px; padding-left: 11px; border-left: 1px solid #d2d2d2; height: 88px; }
.collapse { margin: auto 6px 7px auto; }

.formula { display: flex; height: 54px; padding-top: 5px; flex: none; font-size: 15px; }
.formula > * { height: 30px; background: #fff; border: 1px solid #dcdcdc; border-radius: 5px; display: flex; align-items: center; }
.namebox { width: 150px; border-left: 0; padding: 0 0 0 2px; border-radius: 0 5px 5px 0; }
.namebox input, .entry input { flex: 1; min-width: 0; }
.fx { width: 83px; margin: 0 10px 0 11px; justify-content: space-evenly; }
.fn { font-family: "Liberation Serif", serif; font-size: 20px; }
.fn sub { font-size: 16px; font-family: "Open Sans", sans-serif; font-style: italic; line-height: 16px; }
.entry { flex: 1; padding: 0 5px 2px 10px; border-right: 0; }

.sheet { flex: 1; min-height: 0; overflow: hidden; background: #fff; font-family: Lato, "Open Sans", sans-serif; font-size: 17px; color: #000; }
table { table-layout: fixed; width: 1919px; border-collapse: separate; border-spacing: 0; }
.col-head { width: 40px; }
.col-a { width: 150px; }
.col-b { width: 211px; }
.col-c { width: 187px; }
.col-d { width: 215px; }
.col-e { width: 120px; }
.col-f { width: 240px; }
.col-g, .col-h, .col-i, .col-j { width: 79px; }
.col-i { width: 80px; }
.col-k { width: 194px; }
.col-l { width: 245px; }
th { padding: 0; font-weight: 400; font-size: 16px; color: #666; background: #f4f4f4; border-right: 1px solid #dedede; }
thead th { height: 23px; line-height: 20px; border-bottom: 1px solid #bdbdbd; }
.corner svg { width: 14px; height: 15px; margin: 2px 0 0 20px; }
th.on { background: #c9ead8; color: #107c41; }
tbody th { border-bottom: 1px solid #dedede; border-right: 1px solid #c4c4c4; }
tbody th.on { border-right: 2px solid #107c41; }
tbody th .cell { padding-right: 6px; justify-content: flex-end; align-items: center; }
td { position: relative; padding: 0; border-right: 1px solid #e1e1e1; border-bottom: 1px solid #e1e1e1; }
.cell { display: flex; align-items: flex-end; padding: 0 3px 0 2px; overflow: hidden; line-height: 20px; white-space: pre; }
.h23 { height: 22px; }
.h24 { height: 23px; }
.h47 { height: 46px; }
.h48 { height: 47px; }
.h72 { height: 71px; }
.dense { font-size: 16px; }
.bold { font-weight: 700; }
.num .cell { justify-content: flex-end; }
.wrap .cell { align-items: flex-start; line-height: 25px; }
.note { background: #ff0; border-color: #ff0; }
.note .cell { justify-content: center; align-items: center; text-align: center; }
.warn { color: #f00; }
.note em { color: #f00; font-style: normal; }
.band { background: #f8cbad; border-color: #f8cbad; }
.band .cell { align-items: center; }
.bare { border-color: #fff; }
.open { border-right-color: #fff; }
.picked::before { content: ""; position: absolute; inset: -2px -2px -3px -3px; border: 2px solid #107c41; }
.picked::after { content: ""; position: absolute; right: -4px; bottom: -5px; width: 6px; height: 6px; background: #107c41; border: solid #fff; border-width: 1px 0 0 1px; z-index: 1; }
a { color: #1d6fc4; text-decoration: underline; text-underline-offset: 3px; text-decoration-thickness: 1px; }

.scroll { height: 14px; flex: none; padding-left: 92px; }
.track { display: flex; align-items: center; justify-content: space-between; height: 14px; background: #e6e6e6; padding-right: 8px; }
.thumb { width: 53%; height: 9px; background: #8a8a8a; border-radius: 4px; }
.track svg { width: 8px; height: 10px; }
.sheets { display: flex; align-items: center; height: 42px; flex: none; border-bottom: 1px solid #dedede; }
.prevsheet { margin-left: -4px; }
.nextsheet { margin-left: 20px; }
.all { margin: 0 22px 0 21px; }
.sheettab { height: 41px; width: 264px; margin-right: 20px; font-size: 16px; font-weight: 600; color: #444; border-bottom: 4px solid #1e7b48; padding-top: 3px; }
.status { height: 14px; flex: none; overflow: hidden; background: #fff; }
.statusline { display: flex; align-items: center; justify-content: space-between; height: 30px; padding: 0 11px; font-size: 14px; color: #555; }
.zoom { display: flex; align-items: center; gap: 20px; }
.percent { display: flex; align-items: center; justify-content: space-between; width: 64px; height: 24px; margin: 0 -8px 0 -12px; padding: 0 4px; border: 1px solid #ccc; border-radius: 4px; }
.percent .i16 { width: 14px; height: 14px; }

.bubble { position: absolute; left: 33px; bottom: 34px; width: 91px; height: 73px; }
.disc { position: absolute; left: 3px; top: 0; width: 70px; height: 70px; border-radius: 50%; background: #fbfbfb; box-shadow: 0 1px 8px #0004; }
.dark { position: absolute; left: 56px; top: 42px; width: 30px; height: 31px; border-radius: 50%; background: #10182b; }
.smudge { position: absolute; left: 0; top: 9px; width: 91px; height: 54px; overflow: hidden; background: linear-gradient(90deg, #f3f3f3, #f9f9f9 30%, #fcfcfc); }
.pink { position: absolute; left: 25px; top: 7px; width: 26px; height: 36px; border-radius: 50%; background: #f0a3a3; filter: blur(8px); }
.navy { position: absolute; left: 58px; top: 32px; width: 34px; height: 38px; border-radius: 50%; background: #1b2236; filter: blur(8px); }
</style>
